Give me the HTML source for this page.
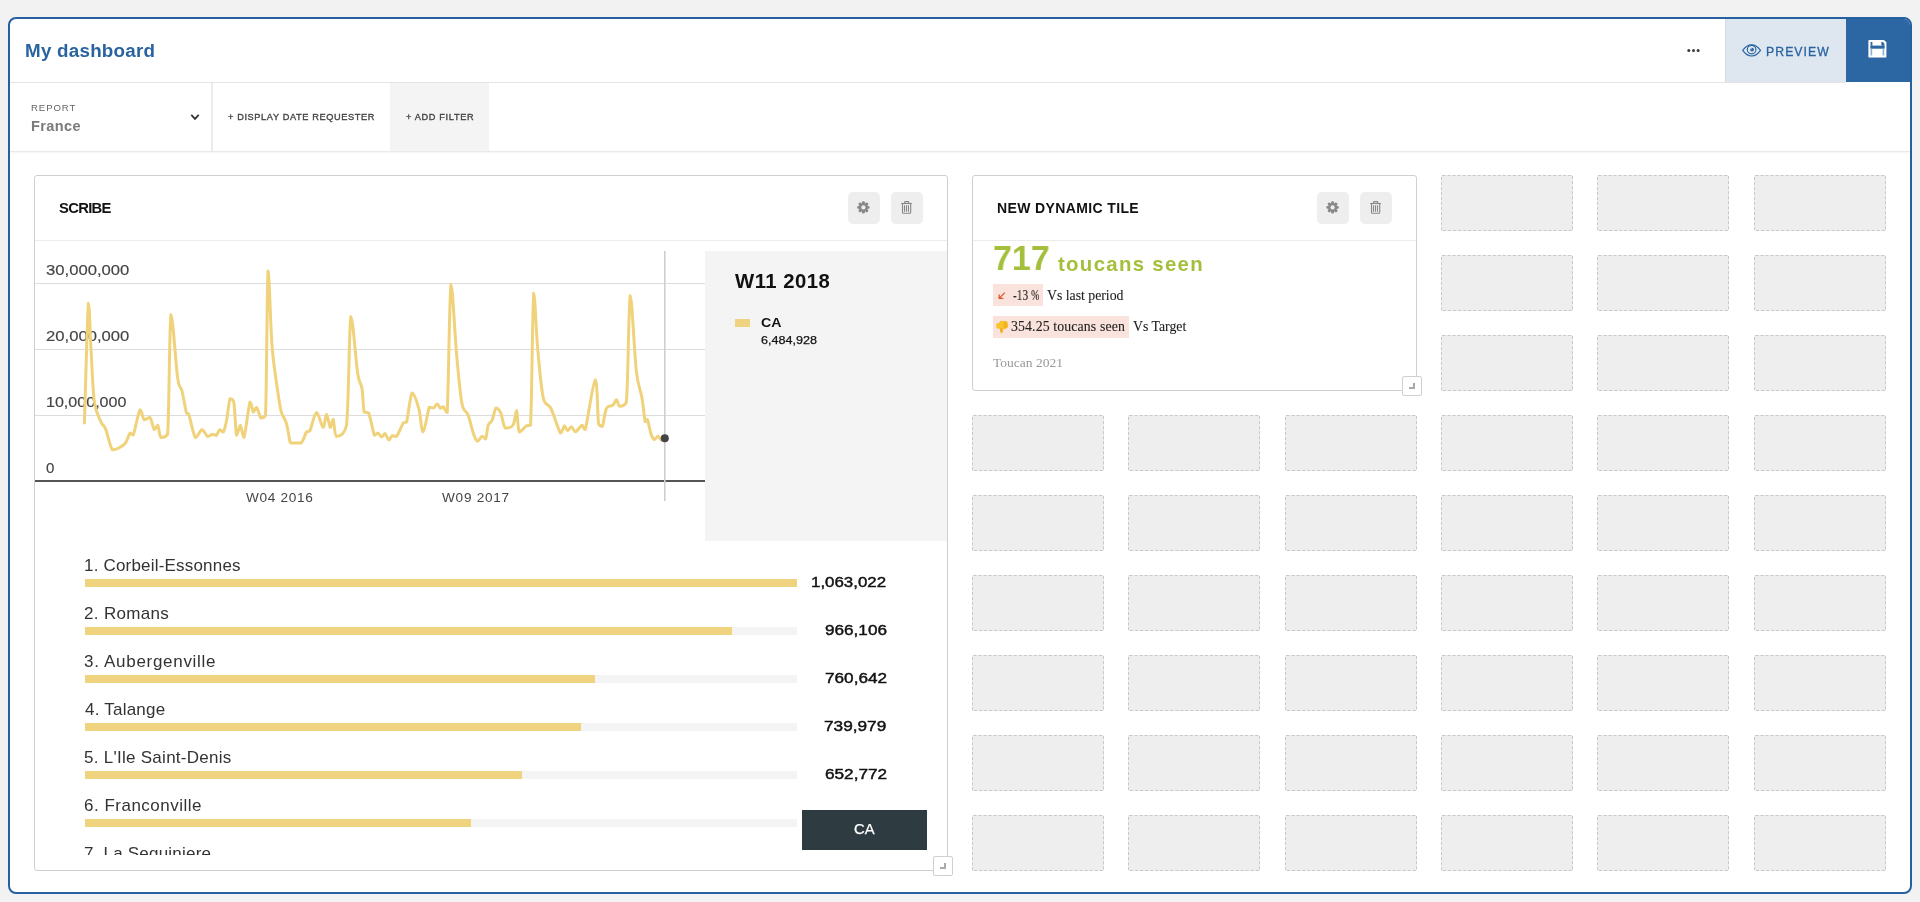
<!DOCTYPE html>
<html><head><meta charset="utf-8">
<style>
*{box-sizing:border-box;margin:0;padding:0}
html,body{width:1920px;height:902px;overflow:hidden;background:#f2f2f2;font-family:"Liberation Sans",sans-serif}
.a{position:absolute}
.t{position:absolute;white-space:nowrap;line-height:1;will-change:transform}
#frame{left:8px;top:17px;width:1904px;height:877px;border:2px solid #2760a0;border-radius:8px;background:#fff;overflow:hidden}
.ph{position:absolute;width:132px;height:56px;background:#eeeeee;border:1px dashed #c8c8c8;border-radius:1.5px}
.tile{position:absolute;background:#fff;border:1px solid #cfcfcf;border-radius:3px}
.btn{position:absolute;top:192px;width:32px;height:32px;background:#eeeeee;border-radius:5px}
.bar{position:absolute;left:85px;width:712px;height:8px;background:#f4f4f4}
.bar i{position:absolute;left:0;top:0;height:8px;background:#f0d37f}
.rh{position:absolute;width:20px;height:20px;background:#fff;border:1px solid #d0d0d0;border-radius:2px}
.rh b{position:absolute;background:#aaa}
</style></head><body>
<div id="frame" class="a">
  <div class="a" style="left:1715px;top:0;width:121px;height:63px;background:#dee6ef"></div><div class="a" style="left:1715px;top:0;width:1px;height:63px;background:#cfdce9"></div>
  <div class="a" style="left:1836px;top:0;width:70px;height:63px;background:#2c66a3"></div>
</div>

<!-- header / filter bar lines -->
<div class="a" style="left:10px;top:82px;width:1836px;height:1px;background:#e4e4e4"></div>
<div class="a" style="left:211px;top:83px;width:2px;height:68px;background:#ebebeb"></div>
<div class="a" style="left:390px;top:83px;width:99px;height:68px;background:#f4f4f4"></div>
<div class="a" style="left:10px;top:151px;width:1900px;height:1px;background:#eaeaea"></div>
<div class="a" style="left:10px;top:152px;width:1900px;height:1px;background:#f7f7f7"></div>
<div class="a" style="left:10px;top:153px;width:1900px;height:1px;background:#fcfcfc"></div>

<!-- placeholders -->
<div class="ph" style="left:1441.0px;top:175px"></div>
<div class="ph" style="left:1597.3px;top:175px"></div>
<div class="ph" style="left:1753.7px;top:175px"></div>
<div class="ph" style="left:1441.0px;top:255px"></div>
<div class="ph" style="left:1597.3px;top:255px"></div>
<div class="ph" style="left:1753.7px;top:255px"></div>
<div class="ph" style="left:1441.0px;top:335px"></div>
<div class="ph" style="left:1597.3px;top:335px"></div>
<div class="ph" style="left:1753.7px;top:335px"></div>
<div class="ph" style="left:972.0px;top:415px"></div>
<div class="ph" style="left:1128.3px;top:415px"></div>
<div class="ph" style="left:1284.7px;top:415px"></div>
<div class="ph" style="left:1441.0px;top:415px"></div>
<div class="ph" style="left:1597.3px;top:415px"></div>
<div class="ph" style="left:1753.7px;top:415px"></div>
<div class="ph" style="left:972.0px;top:495px"></div>
<div class="ph" style="left:1128.3px;top:495px"></div>
<div class="ph" style="left:1284.7px;top:495px"></div>
<div class="ph" style="left:1441.0px;top:495px"></div>
<div class="ph" style="left:1597.3px;top:495px"></div>
<div class="ph" style="left:1753.7px;top:495px"></div>
<div class="ph" style="left:972.0px;top:575px"></div>
<div class="ph" style="left:1128.3px;top:575px"></div>
<div class="ph" style="left:1284.7px;top:575px"></div>
<div class="ph" style="left:1441.0px;top:575px"></div>
<div class="ph" style="left:1597.3px;top:575px"></div>
<div class="ph" style="left:1753.7px;top:575px"></div>
<div class="ph" style="left:972.0px;top:655px"></div>
<div class="ph" style="left:1128.3px;top:655px"></div>
<div class="ph" style="left:1284.7px;top:655px"></div>
<div class="ph" style="left:1441.0px;top:655px"></div>
<div class="ph" style="left:1597.3px;top:655px"></div>
<div class="ph" style="left:1753.7px;top:655px"></div>
<div class="ph" style="left:972.0px;top:735px"></div>
<div class="ph" style="left:1128.3px;top:735px"></div>
<div class="ph" style="left:1284.7px;top:735px"></div>
<div class="ph" style="left:1441.0px;top:735px"></div>
<div class="ph" style="left:1597.3px;top:735px"></div>
<div class="ph" style="left:1753.7px;top:735px"></div>
<div class="ph" style="left:972.0px;top:815px"></div>
<div class="ph" style="left:1128.3px;top:815px"></div>
<div class="ph" style="left:1284.7px;top:815px"></div>
<div class="ph" style="left:1441.0px;top:815px"></div>
<div class="ph" style="left:1597.3px;top:815px"></div>
<div class="ph" style="left:1753.7px;top:815px"></div>

<!-- tile 1 -->
<div class="tile" style="left:34px;top:175px;width:914px;height:696px;overflow:hidden">
  <div class="a" style="left:0;top:64px;width:912px;height:1px;background:#ececec"></div>
  <div class="a" style="left:670px;top:75px;width:242px;height:290px;background:#f4f4f4"></div>
</div>
<div class="btn" style="left:848px"></div>
<div class="btn" style="left:891px"></div>
<!-- tile 2 -->
<div class="tile" style="left:972px;top:175px;width:445px;height:216px">
  <div class="a" style="left:0;top:64px;width:443px;height:1px;background:#ececec"></div>
</div>
<div class="btn" style="left:1317px"></div>
<div class="btn" style="left:1360px"></div>
<div class="a" style="left:993px;top:284px;width:50px;height:22px;background:#fae3dc"></div>
<div class="a" style="left:993px;top:316px;width:136px;height:22px;background:#fae3dc"></div>

<!-- legend swatch -->
<div class="a" style="left:735px;top:319px;width:15px;height:8px;background:#f0d37f"></div>

<!-- bars -->
<div class="a" style="left:35px;top:541px;width:912px;height:314px;overflow:hidden">
<div class="a" style="left:-35px;top:-541px;width:1000px;height:1000px">
<div class="bar" style="top:579px"><i style="width:712.0px"></i></div>
<div class="bar" style="top:627px"><i style="width:647.0px"></i></div>
<div class="bar" style="top:675px"><i style="width:509.5px"></i></div>
<div class="bar" style="top:723px"><i style="width:495.7px"></i></div>
<div class="bar" style="top:771px"><i style="width:437.2px"></i></div>
<div class="bar" style="top:819px"><i style="width:386.0px"></i></div>
<div class="t" style="left:84.00px;top:556.75px;font-family:Liberation Sans,sans-serif;font-size:17.00px;font-weight:normal;letter-spacing:0.194px;color:#333;">1. Corbeil-Essonnes</div>
<div class="t" style="left:84.00px;top:604.75px;font-family:Liberation Sans,sans-serif;font-size:17.00px;font-weight:normal;letter-spacing:0.325px;color:#333;">2. Romans</div>
<div class="t" style="left:84.00px;top:652.75px;font-family:Liberation Sans,sans-serif;font-size:17.00px;font-weight:normal;letter-spacing:0.700px;color:#333;">3. Aubergenville</div>
<div class="t" style="left:85.00px;top:700.75px;font-family:Liberation Sans,sans-serif;font-size:17.00px;font-weight:normal;letter-spacing:0.222px;color:#333;">4. Talange</div>
<div class="t" style="left:84.00px;top:748.75px;font-family:Liberation Sans,sans-serif;font-size:17.00px;font-weight:normal;letter-spacing:0.274px;color:#333;">5. L&#x27;Ile Saint-Denis</div>
<div class="t" style="left:84.00px;top:796.75px;font-family:Liberation Sans,sans-serif;font-size:17.00px;font-weight:normal;letter-spacing:0.500px;color:#333;">6. Franconville</div>
<div class="t" style="left:84.00px;top:844.75px;font-family:Liberation Sans,sans-serif;font-size:17.00px;font-weight:normal;letter-spacing:0.213px;color:#333;">7. La Seguiniere</div>
<div class="t" style="left:811.00px;top:574.45px;font-family:Liberation Sans,sans-serif;font-size:15.00px;font-weight:normal;letter-spacing:0.000px;color:#111;transform:scaleX(1.1258);transform-origin:0 0;-webkit-text-stroke:0.45px #111;">1,063,022</div>
<div class="t" style="left:824.60px;top:622.45px;font-family:Liberation Sans,sans-serif;font-size:15.00px;font-weight:normal;letter-spacing:0.000px;color:#111;transform:scaleX(1.1426);transform-origin:0 0;-webkit-text-stroke:0.45px #111;">966,106</div>
<div class="t" style="left:824.50px;top:670.45px;font-family:Liberation Sans,sans-serif;font-size:15.00px;font-weight:normal;letter-spacing:0.000px;color:#111;transform:scaleX(1.1444);transform-origin:0 0;-webkit-text-stroke:0.45px #111;">760,642</div>
<div class="t" style="left:824.30px;top:718.45px;font-family:Liberation Sans,sans-serif;font-size:15.00px;font-weight:normal;letter-spacing:0.000px;color:#111;transform:scaleX(1.1481);transform-origin:0 0;-webkit-text-stroke:0.45px #111;">739,979</div>
<div class="t" style="left:824.50px;top:766.45px;font-family:Liberation Sans,sans-serif;font-size:15.00px;font-weight:normal;letter-spacing:0.000px;color:#111;transform:scaleX(1.1444);transform-origin:0 0;-webkit-text-stroke:0.45px #111;">652,772</div>
</div></div>

<!-- CA button -->
<div class="a" style="left:802px;top:810px;width:125px;height:40px;background:#2e3b40"></div>

<!-- resize handles -->
<div class="rh" style="left:933px;top:856px"><b style="left:10px;top:6px;width:2px;height:6px"></b><b style="left:6px;top:10px;width:6px;height:2px"></b></div>
<div class="rh" style="left:1402px;top:376px"><b style="left:10px;top:6px;width:2px;height:6px"></b><b style="left:6px;top:10px;width:6px;height:2px"></b></div>

<div class="t" style="left:45.60px;top:262.90px;font-family:Liberation Sans,sans-serif;font-size:14.00px;font-weight:normal;letter-spacing:0.000px;color:#444;transform:scaleX(1.1899);transform-origin:0 0;-webkit-text-stroke:0.15px #444;">30,000,000</div>
<div class="t" style="left:45.60px;top:328.90px;font-family:Liberation Sans,sans-serif;font-size:14.00px;font-weight:normal;letter-spacing:0.000px;color:#444;transform:scaleX(1.1899);transform-origin:0 0;-webkit-text-stroke:0.15px #444;">20,000,000</div>
<div class="t" style="left:45.60px;top:394.90px;font-family:Liberation Sans,sans-serif;font-size:14.00px;font-weight:normal;letter-spacing:0.000px;color:#444;transform:scaleX(1.1478);transform-origin:0 0;-webkit-text-stroke:0.15px #444;">10,000,000</div>
<div class="t" style="left:46.40px;top:461.20px;font-family:Liberation Sans,sans-serif;font-size:14.00px;font-weight:normal;letter-spacing:0.000px;color:#444;transform:scaleX(1.0750);transform-origin:0 0;-webkit-text-stroke:0.15px #444;">0</div><svg class="a" style="left:0;top:0" width="1920" height="902" viewBox="0 0 1920 902"><rect x="35" y="283.0" width="670" height="1" fill="#dcdcdc"/><rect x="35" y="349.0" width="670" height="1" fill="#dcdcdc"/><rect x="35" y="415.0" width="670" height="1" fill="#dcdcdc"/><rect x="35" y="480" width="670" height="2" fill="#555"/><path d="M84.4 423.0 C85.1 403.1 87.3 315.6 88.4 303.3 C89.5 303.3 90.0 332.6 91.0 349.0 C92.0 365.4 92.7 389.8 94.4 402.0 C96.1 414.2 99.2 417.6 101.0 422.0 C102.8 426.4 103.6 424.0 105.5 428.6 C107.4 433.2 110.0 446.5 112.2 449.7 C114.4 449.7 116.6 449.1 118.8 448.0 C121.0 446.9 123.6 445.5 125.5 443.0 C127.4 440.5 128.7 434.3 130.0 433.0 C131.3 433.0 131.6 435.0 133.3 435.0 C135.0 431.1 138.2 412.3 140.0 409.8 C141.8 409.8 142.6 418.5 144.3 419.8 C146.0 419.8 148.3 417.5 150.0 417.5 C151.7 419.1 153.0 428.4 154.3 429.7 C155.6 429.7 156.6 425.3 157.7 425.3 C158.8 426.6 159.3 436.1 161.0 437.5 C162.7 437.5 165.9 437.5 167.6 434.0 C169.3 413.5 169.3 323.8 171.0 314.4 C172.7 314.4 175.8 364.8 177.6 377.6 C179.4 390.4 180.5 385.1 182.0 391.0 C183.5 396.9 185.4 409.2 186.5 413.0 C187.6 414.0 187.2 413.0 188.7 414.0 C190.2 418.1 193.2 434.9 195.4 437.5 C197.6 437.5 200.0 429.9 202.0 429.7 C204.0 429.7 205.8 435.6 207.6 436.4 C209.4 436.4 211.3 434.4 212.7 434.3 C214.1 434.3 215.0 435.5 216.2 435.5 C217.4 434.7 218.6 430.3 219.8 429.7 C221.0 429.7 222.2 432.0 223.3 432.0 C224.5 430.4 225.6 425.4 226.7 419.8 C227.8 414.2 228.8 401.7 230.0 398.7 C231.2 398.7 232.7 398.7 233.8 402.0 C234.9 408.1 235.5 431.4 236.6 435.3 C237.7 435.3 239.2 425.3 240.4 425.3 C241.6 425.7 242.4 437.5 244.0 437.5 C245.6 433.6 248.4 406.2 250.0 402.0 C251.6 402.0 252.2 411.1 253.3 412.0 C254.4 412.0 255.3 407.5 256.6 407.5 C257.9 408.5 259.5 416.7 261.0 418.0 C262.5 418.0 264.3 418.0 265.5 415.3 C266.7 390.8 267.0 282.5 268.1 271.0 C269.2 271.0 270.5 326.5 272.1 346.5 C273.7 366.5 276.2 380.2 277.7 391.0 C279.2 401.8 279.9 406.4 281.0 411.0 C282.1 415.6 283.5 416.4 284.4 418.6 C285.3 420.8 285.9 421.3 286.6 424.0 C287.3 426.7 288.1 431.8 288.8 435.0 C289.5 438.2 289.0 441.7 291.0 443.0 C293.0 443.0 298.4 443.0 301.0 443.0 C303.6 441.2 305.0 434.0 306.5 432.0 C308.0 430.8 308.2 432.0 309.9 430.8 C311.6 427.6 314.3 413.2 316.5 412.6 C318.7 412.6 321.5 427.2 323.2 427.5 C324.9 427.5 325.3 414.2 326.5 414.2 C327.7 414.2 329.2 426.6 330.3 427.5 C331.4 427.5 332.2 419.3 333.2 419.3 C334.2 420.8 334.3 435.4 336.5 436.4 C338.7 436.4 344.1 436.4 346.5 425.3 C348.9 405.3 349.0 325.3 350.9 316.6 C352.8 316.6 355.8 361.0 357.6 373.0 C359.5 385.0 360.9 382.2 362.0 388.7 C363.1 395.2 363.1 407.9 364.2 412.0 C365.3 413.0 367.0 412.0 368.7 413.0 C370.4 416.9 372.9 432.0 374.4 435.3 C375.9 435.3 376.6 433.0 377.8 433.0 C379.0 433.3 380.5 436.9 381.7 437.0 C382.9 437.0 383.7 433.5 384.9 433.5 C386.1 434.0 387.6 439.6 388.8 440.0 C390.0 440.0 390.9 436.3 392.2 435.7 C393.5 435.7 394.8 436.4 396.6 436.4 C398.5 434.3 401.6 425.4 403.3 423.0 C405.0 422.0 405.1 423.0 406.6 422.0 C408.1 417.0 410.1 395.2 412.1 393.0 C414.1 393.0 417.0 402.2 418.8 408.7 C420.6 415.2 421.4 432.0 423.1 432.0 C424.9 431.8 427.6 411.2 429.3 407.2 C431.1 407.2 432.3 408.0 433.6 408.0 C434.9 407.5 435.9 404.0 437.1 404.0 C438.3 404.1 439.6 407.8 440.6 408.3 C441.6 408.3 442.2 406.8 443.3 406.8 C444.4 407.5 445.9 412.6 447.2 412.6 C448.5 392.2 449.4 294.3 451.0 284.4 C452.6 284.4 454.7 333.4 456.5 353.2 C458.3 373.0 460.0 393.0 461.9 403.3 C463.8 413.6 466.2 409.9 468.1 414.9 C470.0 419.8 471.6 428.6 473.2 433.0 C474.8 437.4 475.9 440.8 477.4 441.3 C478.9 441.3 480.7 436.6 482.1 436.2 C483.5 436.2 484.6 439.0 485.6 439.0 C486.6 437.1 487.2 428.1 488.3 425.0 C489.4 421.9 490.8 423.2 492.1 420.3 C493.4 417.4 494.6 409.2 496.0 407.9 C497.4 407.9 499.1 409.2 500.7 412.6 C502.2 416.0 503.2 426.0 505.3 428.1 C507.4 428.1 511.2 427.9 513.1 425.0 C515.0 422.1 515.6 410.6 516.6 410.6 C517.6 411.8 517.6 429.5 519.3 432.0 C521.0 432.0 524.7 426.9 526.6 425.8 C528.5 425.2 529.4 425.8 530.6 425.2 C531.8 403.1 532.5 306.1 533.7 293.3 C534.9 293.3 536.1 331.3 537.7 348.7 C539.3 366.1 541.0 387.5 543.2 397.5 C545.4 407.5 548.1 402.6 551.0 408.5 C553.9 414.4 558.3 430.1 560.5 433.0 C562.7 433.0 563.1 426.2 564.3 425.8 C565.5 425.8 566.4 430.6 567.6 430.7 C568.8 430.7 570.1 426.7 571.4 426.7 C572.7 426.9 573.6 431.8 575.4 431.8 C577.2 431.6 580.4 425.6 582.0 425.2 C583.6 425.2 583.1 429.6 585.3 429.6 C587.5 422.0 593.1 380.6 595.3 379.7 C597.5 379.7 597.4 416.2 598.6 424.0 C599.8 426.3 601.1 426.3 602.4 426.3 C603.7 423.7 604.6 412.0 606.4 408.5 C608.2 405.2 611.3 406.7 613.0 405.2 C614.7 403.7 615.3 399.7 616.4 399.7 C617.5 399.9 618.0 405.9 619.7 406.3 C621.4 406.3 624.6 406.3 626.4 401.9 C628.2 383.4 628.6 300.7 630.3 295.5 C631.9 295.5 634.4 353.8 636.3 370.8 C638.2 387.8 640.4 389.0 641.9 397.5 C643.4 406.0 644.3 418.1 645.2 421.8 C646.1 421.8 646.4 419.6 647.4 419.6 C648.4 421.6 649.9 430.7 651.0 434.0 C652.1 437.3 653.1 439.1 654.3 439.5 C655.5 439.5 656.8 436.2 658.0 436.2 C659.2 436.3 660.2 439.9 661.3 440.3 C662.4 440.3 664.0 438.6 664.6 438.3" fill="none" stroke="#f0d27b" stroke-width="3" stroke-linejoin="round" stroke-linecap="round"/><rect x="664" y="251" width="1.6" height="250" fill="#cfcfcf"/><circle cx="664.8" cy="438.3" r="4" fill="#444"/><g fill="#888"><circle cx="863.40" cy="207.40" r="4.5"/><rect x="861.95" y="201.20" width="2.9" height="3.2" rx="1.1" transform="rotate(0 863.40 207.40)"/><rect x="861.95" y="201.20" width="2.9" height="3.2" rx="1.1" transform="rotate(45 863.40 207.40)"/><rect x="861.95" y="201.20" width="2.9" height="3.2" rx="1.1" transform="rotate(90 863.40 207.40)"/><rect x="861.95" y="201.20" width="2.9" height="3.2" rx="1.1" transform="rotate(135 863.40 207.40)"/><rect x="861.95" y="201.20" width="2.9" height="3.2" rx="1.1" transform="rotate(180 863.40 207.40)"/><rect x="861.95" y="201.20" width="2.9" height="3.2" rx="1.1" transform="rotate(225 863.40 207.40)"/><rect x="861.95" y="201.20" width="2.9" height="3.2" rx="1.1" transform="rotate(270 863.40 207.40)"/><rect x="861.95" y="201.20" width="2.9" height="3.2" rx="1.1" transform="rotate(315 863.40 207.40)"/></g><circle cx="863.40" cy="207.40" r="2.1" fill="#eeeeee"/><g fill="#888"><circle cx="1332.60" cy="207.40" r="4.5"/><rect x="1331.15" y="201.20" width="2.9" height="3.2" rx="1.1" transform="rotate(0 1332.60 207.40)"/><rect x="1331.15" y="201.20" width="2.9" height="3.2" rx="1.1" transform="rotate(45 1332.60 207.40)"/><rect x="1331.15" y="201.20" width="2.9" height="3.2" rx="1.1" transform="rotate(90 1332.60 207.40)"/><rect x="1331.15" y="201.20" width="2.9" height="3.2" rx="1.1" transform="rotate(135 1332.60 207.40)"/><rect x="1331.15" y="201.20" width="2.9" height="3.2" rx="1.1" transform="rotate(180 1332.60 207.40)"/><rect x="1331.15" y="201.20" width="2.9" height="3.2" rx="1.1" transform="rotate(225 1332.60 207.40)"/><rect x="1331.15" y="201.20" width="2.9" height="3.2" rx="1.1" transform="rotate(270 1332.60 207.40)"/><rect x="1331.15" y="201.20" width="2.9" height="3.2" rx="1.1" transform="rotate(315 1332.60 207.40)"/></g><circle cx="1332.60" cy="207.40" r="2.1" fill="#eeeeee"/><g fill="none" stroke="#888" stroke-width="1.1"><path d="M901.2 203.5 H911.8"/><path d="M904.6 203.3 V202.3 Q904.6 201.6 905.3 201.6 H908.1 Q908.8 201.6 908.8 202.3 V203.3"/><path d="M902.5 203.6 V212.4 Q902.5 213.3 903.4 213.3 H909.8 Q910.7 213.3 910.7 212.4 V203.6"/><path d="M904.5 205.3 V211.8 M906.5 205.3 V211.8 M908.5 205.3 V211.8"/></g><g fill="none" stroke="#888" stroke-width="1.1"><path d="M1370.2 203.5 H1380.8"/><path d="M1373.6 203.3 V202.3 Q1373.6 201.6 1374.3 201.6 H1377.1 Q1377.8 201.6 1377.8 202.3 V203.3"/><path d="M1371.5 203.6 V212.4 Q1371.5 213.3 1372.4 213.3 H1378.8 Q1379.7 213.3 1379.7 212.4 V203.6"/><path d="M1373.5 205.3 V211.8 M1375.5 205.3 V211.8 M1377.5 205.3 V211.8"/></g><path d="M191.3 114.8 L195 118.8 L198.7 114.8" fill="none" stroke="#333" stroke-width="1.8"/><circle cx="1688.8" cy="50.4" r="1.5" fill="#3a3a3a"/><circle cx="1693.5" cy="50.4" r="1.5" fill="#3a3a3a"/><circle cx="1698.1" cy="50.4" r="1.5" fill="#3a3a3a"/><g fill="none" stroke="#2a64a0" stroke-width="1.15"><path d="M1742.7 50.4 C1745.6 46.2 1748.5 44.8 1751.6 44.8 C1754.7 44.8 1757.6 46.2 1760.5 50.4 C1757.6 54.6 1754.7 56 1751.6 56 C1748.5 56 1745.6 54.6 1742.7 50.4Z"/><circle cx="1751.6" cy="49.6" r="4.3"/></g><circle cx="1752" cy="49.6" r="1.9" fill="#2a64a0"/><circle cx="1751" cy="48.8" r="0.7" fill="#dee6ef"/><path d="M1869.3 40.8 H1883.6 L1885.5 42.7 V56.7 H1869.3Z" fill="#fff" stroke="#fff" stroke-width="1.8" stroke-linejoin="round"/><rect x="1870.3" y="45.6" width="14.4" height="3.1" fill="#2c66a3"/><rect x="1870.6" y="42" width="1.8" height="3.8" fill="#2c66a3"/><path d="M1881.4 42 h1.4 l1.6 1.6 v2.2 h-3Z" fill="#2c66a3"/><rect x="1870.6" y="48.5" width="1.6" height="7" fill="#8aaed3"/><rect x="1882.6" y="48.5" width="1.6" height="7" fill="#8aaed3"/><path d="M1004.8 292.7 L999.4 298.1 M999.2 294.4 V298.4 H1003.3" fill="none" stroke="#de5024" stroke-width="1.2"/><path d="M996.2 324.6 q0-1.6 1.6-1.6 h1.6 v-0.6 q0-1.3 1.3-1.3 h4.8 q2.4 0 2.4 2.6 v2.6 q0 2.2-2.2 2.4 h-2.4 l-0.5 3.4 q-0.3 1.3-1.3 1.3 q-1 0-1.2-1.3 l-0.5-3.4 h-1.2 q-2.4 0-2.4-1.6z" fill="#f8c430"/><path d="M1003.5 321.6 q2.6 0 3.4 1.2 q0.6 1 0.6 2.4 v1 q0 2-2.2 2.2 h-1.8z" fill="#f2b222"/><path d="M1000.2 328.2 h2.4 l-0.5 3.2 q-0.3 1.2-0.8 1.2 q-0.5 0-0.7-1.2z" fill="#f0a81c"/></svg>
<div class="t" style="left:25.30px;top:41.82px;font-family:Liberation Sans,sans-serif;font-size:18.80px;font-weight:bold;letter-spacing:0.245px;color:#2a64a0;">My dashboard</div>
<div class="t" style="left:31.00px;top:103.24px;font-family:Liberation Sans,sans-serif;font-size:9.60px;font-weight:normal;letter-spacing:0.900px;color:#666;">REPORT</div>
<div class="t" style="left:31.00px;top:118.67px;font-family:Liberation Sans,sans-serif;font-size:14.50px;font-weight:bold;letter-spacing:0.400px;color:#7a7a7a;">France</div>
<div class="t" style="left:228.00px;top:113.48px;font-family:Liberation Sans,sans-serif;font-size:9.20px;font-weight:normal;letter-spacing:0.622px;color:#444;-webkit-text-stroke:0.35px #444;">+ DISPLAY DATE REQUESTER</div>
<div class="t" style="left:406.00px;top:113.48px;font-family:Liberation Sans,sans-serif;font-size:9.20px;font-weight:normal;letter-spacing:0.664px;color:#444;-webkit-text-stroke:0.35px #444;">+ ADD FILTER</div>
<div class="t" style="left:1765.60px;top:45.93px;font-family:Liberation Sans,sans-serif;font-size:12.20px;font-weight:normal;letter-spacing:1.100px;color:#2a64a0;-webkit-text-stroke:0.3px #2a64a0;">PREVIEW</div>
<div class="t" style="left:58.80px;top:200.62px;font-family:Liberation Sans,sans-serif;font-size:14.80px;font-weight:bold;letter-spacing:-0.700px;color:#111;">SCRIBE</div>
<div class="t" style="left:245.60px;top:491.24px;font-family:Liberation Sans,sans-serif;font-size:13.60px;font-weight:normal;letter-spacing:0.700px;color:#444;">W04 2016</div>
<div class="t" style="left:442.00px;top:491.24px;font-family:Liberation Sans,sans-serif;font-size:13.60px;font-weight:normal;letter-spacing:0.743px;color:#444;">W09 2017</div>
<div class="t" style="left:735.20px;top:270.75px;font-family:Liberation Sans,sans-serif;font-size:20.30px;font-weight:bold;letter-spacing:0.486px;color:#111;">W11 2018</div>
<div class="t" style="left:760.50px;top:316.32px;font-family:Liberation Sans,sans-serif;font-size:13.50px;font-weight:bold;letter-spacing:0.000px;color:#111;transform:scaleX(1.0474);transform-origin:0 0;">CA</div>
<div class="t" style="left:760.50px;top:333.84px;font-family:Liberation Sans,sans-serif;font-size:11.60px;font-weight:normal;letter-spacing:0.000px;color:#111;transform:scaleX(1.0865);transform-origin:0 0;-webkit-text-stroke:0.25px #111;">6,484,928</div>
<div class="t" style="left:853.70px;top:822.42px;font-family:Liberation Sans,sans-serif;font-size:14.80px;font-weight:normal;letter-spacing:0.000px;color:#fff;-webkit-text-stroke:0.25px #fff;">CA</div>
<div class="t" style="left:996.70px;top:201.00px;font-family:Liberation Sans,sans-serif;font-size:14.00px;font-weight:bold;letter-spacing:0.373px;color:#111;">NEW DYNAMIC TILE</div>
<div class="t" style="left:993.30px;top:241.43px;font-family:Liberation Sans,sans-serif;font-size:35.50px;font-weight:bold;letter-spacing:0.000px;color:#a3bf3b;transform:scaleX(0.9579);transform-origin:0 0;">717</div>
<div class="t" style="left:1057.80px;top:253.56px;font-family:Liberation Sans,sans-serif;font-size:20.40px;font-weight:bold;letter-spacing:1.309px;color:#a3bf3b;">toucans seen</div>
<div class="t" style="left:1012.80px;top:288.55px;font-family:Liberation Serif,serif;font-size:13.80px;font-weight:normal;letter-spacing:0.000px;color:#222;transform:scaleX(0.8222);transform-origin:0 0;-webkit-text-stroke:0.1px #222;">-13</div>
<div class="t" style="left:1031.00px;top:288.55px;font-family:Liberation Serif,serif;font-size:13.80px;font-weight:normal;letter-spacing:0.000px;color:#222;transform:scaleX(0.7364);transform-origin:0 0;-webkit-text-stroke:0.1px #222;">%</div>
<div class="t" style="left:1047.30px;top:288.55px;font-family:Liberation Serif,serif;font-size:13.80px;font-weight:normal;letter-spacing:-0.015px;color:#222;-webkit-text-stroke:0.1px #222;">Vs last period</div>
<div class="t" style="left:1011.40px;top:320.35px;font-family:Liberation Serif,serif;font-size:13.80px;font-weight:normal;letter-spacing:0.128px;color:#222;-webkit-text-stroke:0.1px #222;">354.25 toucans seen</div>
<div class="t" style="left:1132.80px;top:320.35px;font-family:Liberation Serif,serif;font-size:13.80px;font-weight:normal;letter-spacing:0.000px;color:#222;-webkit-text-stroke:0.1px #222;">Vs Target</div>
<div class="t" style="left:993.00px;top:355.80px;font-family:Liberation Serif,serif;font-size:13.50px;font-weight:normal;letter-spacing:0.000px;color:#999;">Toucan 2021</div>
</body></html>
